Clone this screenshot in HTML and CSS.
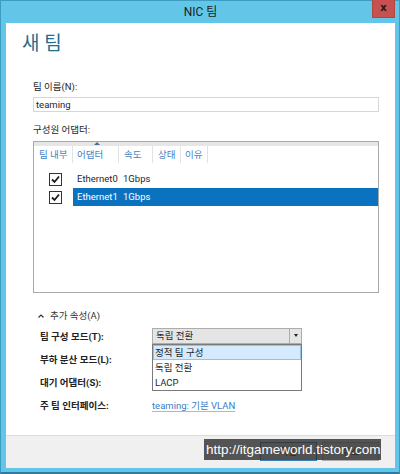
FILE: index.html
```html
<!DOCTYPE html>
<html lang="ko">
<head>
  <meta charset="UTF-8">
  <title>NIC 팀</title>
  <link rel="stylesheet" href="styles.css">
</head>
<body>
  <div class="window">
    <div class="titlebar">
      <span></span>
      <span class="title">NIC 팀</span>
      <span class="close">x</span>
    </div>

    <div class="content">
      <h1>새 팀</h1>

      <div class="form">
        <label class="field-label">팀 이름(N):</label>
        <div class="textbox">teaming</div>

        <label class="field-label members">구성원 어댑터:</label>
        <div class="listbox">
          <div class="list-top"></div>
          <div class="list-head">
            <span class="col col-team">팀 내부</span>
            <span class="col col-adapter">어댑터<i class="sort"></i></span>
            <span class="col col-speed">속도</span>
            <span class="col col-state">상태</span>
            <span class="col col-reason">이유</span>
          </div>
          <div class="list-row">
            <span class="cell-check"><span class="checkbox"><svg width="11" height="11" viewBox="0 0 11 11"><path d="M2 5.5 L4.5 8 L9 2.5" fill="none" stroke="#1a1a1a" stroke-width="1.8"/></svg></span></span>
            <span class="cell-main"><span class="cell-name">Ethernet0</span><span>1Gbps</span></span>
          </div>
          <div class="list-row selected">
            <span class="cell-check"><span class="checkbox"><svg width="11" height="11" viewBox="0 0 11 11"><path d="M2 5.5 L4.5 8 L9 2.5" fill="none" stroke="#1a1a1a" stroke-width="1.8"/></svg></span></span>
            <span class="cell-main"><span class="cell-name">Ethernet1</span><span>1Gbps</span></span>
          </div>
        </div>
      </div>

      <div class="props">
        <div class="expander">
          <svg width="6" height="4" viewBox="0 0 6 4"><path d="M0.5 3.5 L3 1 L5.5 3.5" fill="none" stroke="#333" stroke-width="1.2"/></svg>
          <span>추가 속성(A)</span>
        </div>
        <div class="prop-row first">
          <span class="prop-label">팀 구성 모드(T):</span>
          <div class="combo">
            <span class="combo-text">독립 전환</span>
            <span class="combo-btn"><i class="down"></i></span>
            <ul class="dropdown">
              <li class="active">정적 팀 구성</li>
              <li>독립 전환</li>
              <li>LACP</li>
            </ul>
          </div>
        </div>
        <div class="prop-row">
          <span class="prop-label">부하 분산 모드(L):</span>
        </div>
        <div class="prop-row">
          <span class="prop-label">대기 어댑터(S):</span>
        </div>
        <div class="prop-row">
          <span class="prop-label">주 팀 인터페이스:</span>
          <a class="link">teaming: 기본 VLAN</a>
        </div>
      </div>
    </div>

    <div class="footer">
      <span class="btn default">확인</span>
      <span class="btn">취소</span>
      <div class="watermark">http://itgameworld.tistory.com</div>
    </div>
  </div>
</body>
</html>
```

FILE: styles.css
```css
body {
  margin: 0;
  width: 400px;
  height: 474px;
  overflow: hidden;
  font-family: "Segoe UI", Roboto, "Noto Sans CJK KR", sans-serif;
  font-size: 9.5px;
  color: #262626;
}
.window {
  box-sizing: border-box;
  height: 474px;
  display: flex;
  flex-direction: column;
  background: #63c6e9;
  border: 1px solid #3d9cc2;
  border-bottom: 2px solid #2f7d9e;
  padding: 0 4px 4px 5px;
}
.titlebar {
  height: 22px;
  display: grid;
  grid-template-columns: 1fr auto 1fr;
  align-items: start;
}
.title {
  font-size: 12px;
  line-height: 22px;
  color: #1e1e1e;
}
.close {
  justify-self: end;
  margin-top: -1px;
  width: 23px;
  height: 18px;
  box-sizing: border-box;
  background: #c75050;
  border: 1px solid #b14840;
  border-top: none;
  color: #1a1a1a;
  font: bold 10px/16px "DejaVu Sans", sans-serif;
  text-align: center;
}
.content {
  flex: 1;
  background: #fff;
  display: flex;
  flex-direction: column;
}
h1 {
  margin: 9px 0 0 16px;
  font-size: 19px;
  line-height: 24px;
  font-weight: 400;
  color: #216d8e;
}
.form {
  padding: 0 16px 0 27px;
}
.field-label {
  display: block;
  line-height: 14px;
  margin-top: 24px;
}
.field-label.members {
  margin-top: 11px;
}
.textbox {
  height: 15px;
  box-sizing: border-box;
  border: 1px solid #d6d6d6;
  margin-top: 3px;
  padding-left: 2px;
  line-height: 13px;
}
.listbox {
  margin-top: 4px;
  height: 152px;
  box-sizing: border-box;
  border: 1px solid #a9a9a9;
}
.list-top {
  height: 4px;
  background: #e6e6e6;
}
.list-head {
  display: flex;
  height: 17px;
  line-height: 17px;
  color: #4583c3;
  margin-bottom: 7px;
}
.col {
  position: relative;
  box-sizing: border-box;
  border-right: 1px solid #e3e3e3;
  padding-left: 5px;
}
.col-team { width: 39px; }
.col-adapter { width: 46px; padding-left: 4px; }
.col-speed { width: 34px; }
.col-state { width: 28px; }
.col-reason { width: 27px; padding-left: 4px; }
.sort {
  position: absolute;
  left: 21px;
  top: -4px;
  border-left: 3px solid transparent;
  border-right: 3px solid transparent;
  border-bottom: 3px solid #4a6f90;
}
.list-row {
  display: flex;
  height: 18px;
  line-height: 18px;
}
.cell-check {
  width: 39px;
  box-sizing: border-box;
  padding-left: 15px;
  display: flex;
  align-items: center;
}
.checkbox {
  width: 13px;
  height: 13px;
  box-sizing: border-box;
  border: 1px solid #333;
  background: #fff;
  display: flex;
}
.cell-main {
  flex: 1;
  display: flex;
}
.cell-name {
  width: 50px;
  flex-shrink: 0;
  box-sizing: border-box;
  padding-left: 4px;
  white-space: nowrap;
}
.selected .cell-main {
  background: #0b72c0;
  color: #fff;
}
.props {
  padding-left: 34px;
}
.expander {
  margin: 16px 0 0 -2px;
  line-height: 14px;
  display: flex;
  align-items: center;
  gap: 6px;
  color: #333;
}
.prop-row {
  display: flex;
  align-items: center;
  height: 23px;
}
.prop-row.first {
  margin-top: 1px;
}
.prop-label {
  width: 112px;
  font-weight: 700;
  color: #222;
}
.combo {
  position: relative;
  width: 150px;
  height: 16px;
  box-sizing: border-box;
  border: 1px solid #acacac;
  background: #e5e5e5;
  display: flex;
}
.combo-text {
  flex: 1;
  padding-left: 3px;
  line-height: 14px;
}
.combo-btn {
  width: 11px;
  border-left: 1px solid #acacac;
  display: flex;
  align-items: center;
  justify-content: center;
}
.down {
  border-left: 2.5px solid transparent;
  border-right: 2.5px solid transparent;
  border-top: 3px solid #222;
}
.dropdown {
  position: absolute;
  left: -1px;
  top: 15px;
  width: 150px;
  box-sizing: border-box;
  margin: 0;
  padding: 0;
  list-style: none;
  border: 1px solid #7a7a7a;
  background: #fff;
  z-index: 2;
}
.dropdown li {
  height: 15px;
  line-height: 15px;
  padding-left: 2px;
  box-sizing: border-box;
}
.dropdown li.active {
  background: #d5eafc;
  border: 1px solid #8fc2ee;
  line-height: 13px;
  padding-left: 1px;
}
.link {
  color: #3b7cc2;
  text-decoration: underline;
  text-decoration-color: #9bbde0;
  text-underline-offset: 2px;
}
.footer {
  position: relative;
  height: 33px;
  box-sizing: border-box;
  border-top: 1px solid #dcdcdc;
  background: #f0f0f0;
  display: flex;
  justify-content: flex-end;
  align-items: flex-start;
  gap: 5px;
  padding: 6px 16px 0 0;
}
.btn {
  width: 57px;
  height: 19px;
  box-sizing: border-box;
  border: 1px solid #adadad;
  background: #e1e1e1;
  line-height: 17px;
  text-align: center;
}
.btn.default {
  border-color: #3c7fb1;
}
.watermark {
  position: absolute;
  left: 198px;
  top: 3px;
  width: 177px;
  height: 21px;
  box-sizing: border-box;
  padding-left: 2px;
  background: rgba(45, 45, 45, 0.8);
  color: #fff;
  font: 13.5px/21px "Liberation Sans", sans-serif;
  white-space: nowrap;
}
```
